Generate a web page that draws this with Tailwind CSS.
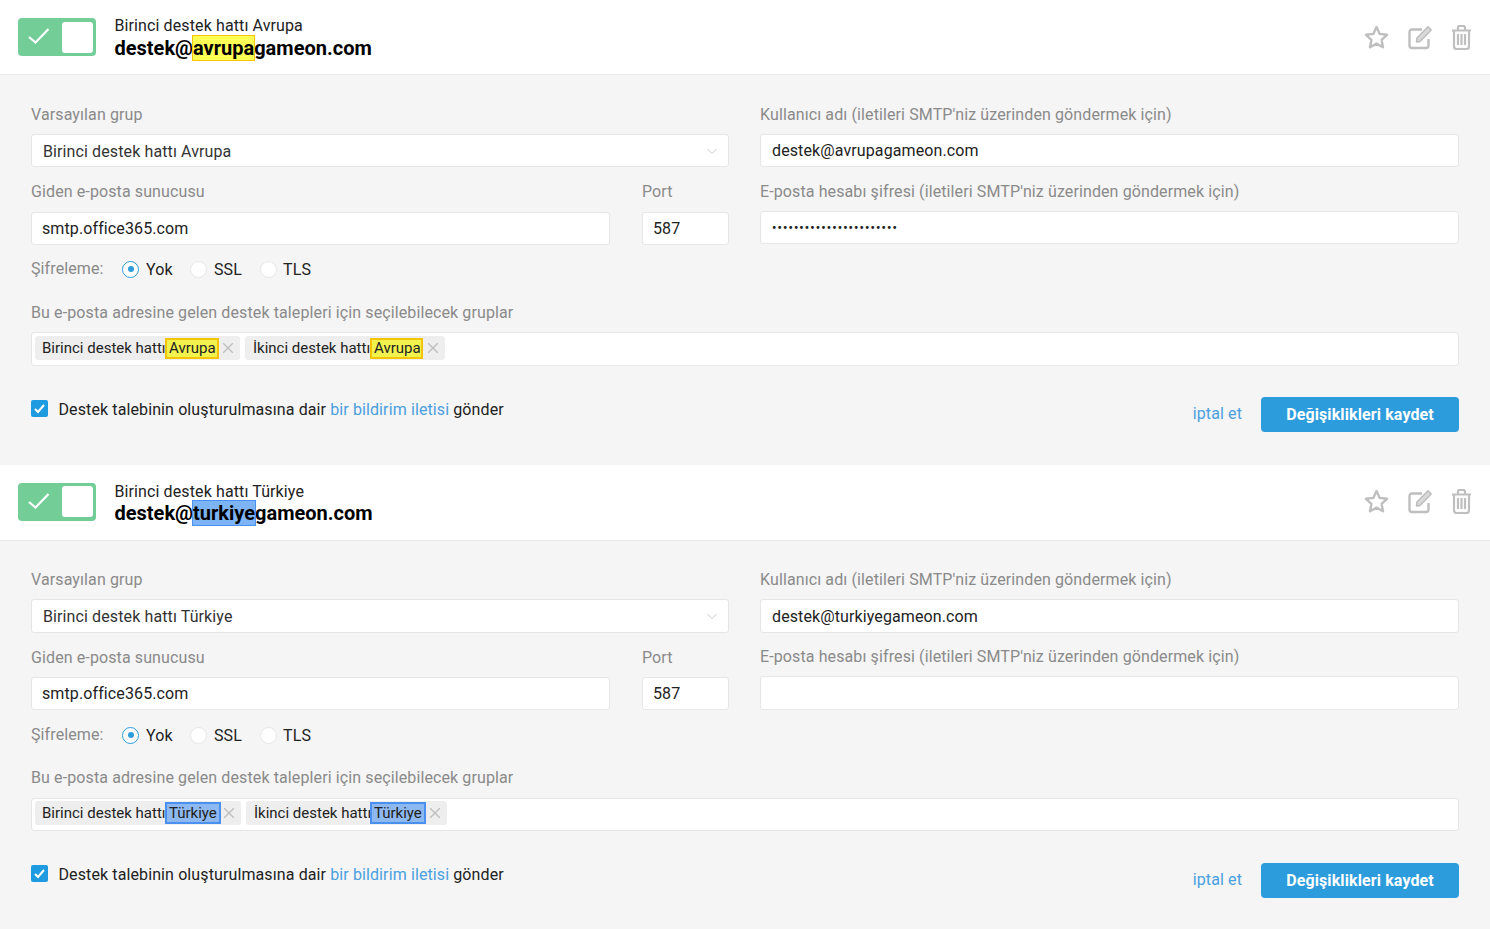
<!DOCTYPE html>
<html lang="tr">
<head>
    <meta charset="UTF-8">
    <title>E-posta hesapları</title>
    <script src="https://cdn.jsdelivr.net/npm/@tailwindcss/browser@4"></script>
</head>
<body class="bg-[#f5f5f5] font-['Roboto',sans-serif] text-[16px] tracking-[0.11px] text-[#222]">

    <!-- Avrupa -->
    <div class="flex h-[75px] items-center border-b border-[#e8e8e8] bg-white pl-[18px] pr-[18px]">
        <div class="flex h-[38px] w-[78px] items-center justify-between rounded-[4px] bg-[#72ce96] pl-[10px] pr-[3px]">
            <svg class="-mt-[2px] h-[22px] w-[22px]" viewBox="0 0 22 22" fill="none" stroke="#fff" stroke-width="2.2"><path d="M1 12l6.500 5.500L20.500 4"/></svg>
            <div class="h-[31px] w-[31px] rounded-[3px] bg-white"></div>
        </div>
        <div class="ml-[18.5px] mt-[2px]">
            <div class="h-[21px] leading-[21px]">Birinci destek hattı Avrupa</div>
            <div class="h-[25px] text-[20px] font-bold leading-[25px] tracking-normal text-black">destek@<span class="bg-[#ffff55] outline outline-1 outline-[#fbc400]">avrupa</span>gameon.com</div>
        </div>
        <div class="ml-auto flex items-center text-[#bfbfbf]">
            <svg class="h-[25px] w-[25px]" viewBox="0 0 25 25" fill="none" stroke="currentColor" stroke-width="2.4" stroke-linejoin="round"><path d="M12.5 2l3.2 6.900 7.300.9-5.400 5.100 1.400 7.400-6.500-3.700-6.500 3.700 1.400-7.400L2 9.800l7.300-.9z"/></svg>
            <svg class="ml-[19px] h-[25px] w-[25px]" viewBox="0 0 25 25" fill="none" stroke="currentColor" stroke-width="2.4" stroke-linejoin="round"><path d="M20.500 14v6.500a2.500 2.500 0 0 1-2.500 2.500H4a2.500 2.500 0 0 1-2.500-2.500V7A2.500 2.500 0 0 1 4 4.500h10"/><path d="M9 13L20 1.800l3.200 3.200L12 16.500 8.500 17z" fill="currentColor" fill-opacity="0.6" stroke-width="1.6"/></svg>
            <svg class="ml-[18px] h-[25px] w-[21px]" viewBox="0 0 21 25" fill="none" stroke="currentColor" stroke-width="2.2"><path d="M1 5.500h19M7 5V2.500A1.500 1.500 0 0 1 8.500 1h4A1.500 1.500 0 0 1 14 2.500V5M3 5.500V21.500A2.500 2.500 0 0 0 5.500 24h10a2.500 2.500 0 0 0 2.500-2.500V5.500M7 9v11M10.500 9v11M14 9v11"/></svg>
        </div>
    </div>
    <div class="h-[390px] px-[31px] pt-[28px]">
        <div class="grid grid-cols-[698px_699px] gap-x-[31px]">
            <div>
                <div class="h-[31px] leading-[24px] text-[#8a8a8a]">Varsayılan grup</div>
                <div class="flex h-[33px] items-center justify-between rounded-[3px] border border-[#e6e6e6] bg-white pl-[11px] pr-[11px]">
                    <span class="mt-[2px] text-[#333]">Birinci destek hattı Avrupa</span>
                    <svg class="h-[10px] w-[10px]" viewBox="0 0 10 10" fill="none" stroke="#c8c8c8"><path d="M.5 3l4.500 4.500L9.500 3"/></svg>
                </div>
                <div class="mt-[13px] grid grid-cols-[579px_87px] gap-x-[32px]">
                    <div>
                        <div class="h-[32px] leading-[24px] text-[#8a8a8a]">Giden e-posta sunucusu</div>
                        <div class="flex h-[33px] items-center rounded-[3px] border border-[#e6e6e6] bg-white px-[10px]">smtp.office365.com</div>
                    </div>
                    <div>
                        <div class="h-[32px] leading-[24px] text-[#8a8a8a]">Port</div>
                        <div class="flex h-[33px] items-center rounded-[3px] border border-[#e6e6e6] bg-white px-[10px]">587</div>
                    </div>
                </div>
            </div>
            <div>
                <div class="h-[31px] leading-[24px] text-[#8a8a8a]">Kullanıcı adı (iletileri SMTP'niz üzerinden göndermek için)</div>
                <div class="flex h-[33px] items-center rounded-[3px] border border-[#e6e6e6] bg-white px-[11px]">destek@avrupagameon.com</div>
                <div class="mt-[13px] h-[31px] leading-[24px] text-[#8a8a8a]">E-posta hesabı şifresi (iletileri SMTP'niz üzerinden göndermek için)</div>
                <div class="flex h-[33px] items-center rounded-[3px] border border-[#e6e6e6] bg-white px-[11px] text-[12px] font-bold tracking-[1.16px]">•••••••••••••••••••••••</div>
            </div>
        </div>
        <div class="mt-[13px] flex h-[22px] items-center">
            <span class="w-[91px] text-[#8a8a8a]">Şifreleme:</span>
            <span class="flex h-[17px] w-[17px] items-center justify-center rounded-full border border-[#2d9cdb] bg-white"><span class="h-[6px] w-[6px] rounded-full bg-[#2d9cdb]"></span></span>
            <span class="ml-[7px] mt-[2px] w-[44px]">Yok</span>
            <span class="h-[17px] w-[17px] rounded-full border border-[#e6e6e6] bg-white"></span>
            <span class="ml-[7px] mt-[2px] w-[46px]">SSL</span>
            <span class="h-[17px] w-[17px] rounded-full border border-[#e6e6e6] bg-white"></span>
            <span class="ml-[6px] mt-[2px]">TLS</span>
        </div>
        <div class="mt-[22px] h-[30px] leading-[22px] text-[#8a8a8a]">Bu e-posta adresine gelen destek talepleri için seçilebilecek gruplar</div>
        <div class="flex h-[34px] items-start gap-x-[5px] rounded-[3px] border border-[#e6e6e6] bg-white pl-[3px] pt-[3px] tracking-normal">
            <div class="flex h-[24px] w-[205px] items-center rounded-[3px] bg-[#eeeeee] pl-[7px] text-[15px]">
                <span class="w-[123px] overflow-hidden whitespace-nowrap">Birinci destek hattı</span>
                <span class="h-[21px] w-[54px] border-2 border-[#f5c400] bg-[#f2f24f] pl-[2px] leading-[17px]">Avrupa</span>
                <svg class="ml-[4px] h-[10px] w-[10px]" viewBox="0 0 10 10" stroke="#bdbdbd" stroke-width="1.3"><path d="M0 0l10 10M10 0L0 10"/></svg>
            </div>
            <div class="flex h-[24px] w-[200px] items-center rounded-[3px] bg-[#eeeeee] pl-[8px] text-[15px]">
                <span class="w-[117px] overflow-hidden whitespace-nowrap">İkinci destek hattı</span>
                <span class="h-[21px] w-[53px] border-2 border-[#f5c400] bg-[#f2f24f] pl-[2px] leading-[17px]">Avrupa</span>
                <svg class="ml-[5px] h-[10px] w-[10px]" viewBox="0 0 10 10" stroke="#bdbdbd" stroke-width="1.3"><path d="M0 0l10 10M10 0L0 10"/></svg>
            </div>
        </div>
        <div class="mt-[31px] flex h-[36px] items-start">
            <div class="mt-[3px] flex h-[17px] w-[17px] items-center justify-center rounded-[2px] bg-[#1e9be0]">
                <svg class="h-[11px] w-[11px]" viewBox="0 0 11 11" fill="none" stroke="#fff" stroke-width="2"><path d="M1 6l3 3 6-7"/></svg>
            </div>
            <span class="ml-[10.5px] mt-[2px] leading-[22px]">Destek talebinin oluşturulmasına dair <span class="text-[#4a9fe0]">bir bildirim iletisi</span> gönder</span>
            <span class="ml-auto mt-[6px] leading-[22px] text-[#4a9fe0]">iptal et</span>
            <div class="ml-[19px] flex h-[35px] w-[198px] items-center justify-center rounded-[4px] bg-[#2d9cdd] font-bold text-white">Değişiklikleri kaydet</div>
        </div>
    </div>

    <!-- Türkiye -->
    <div class="flex h-[76px] items-center border-b border-[#e8e8e8] bg-white pl-[18px] pr-[18px]">
        <div class="-mt-[2px] flex h-[38px] w-[78px] items-center justify-between rounded-[4px] bg-[#72ce96] pl-[10px] pr-[3px]">
            <svg class="-mt-[2px] h-[22px] w-[22px]" viewBox="0 0 22 22" fill="none" stroke="#fff" stroke-width="2.2"><path d="M1 12l6.500 5.500L20.500 4"/></svg>
            <div class="h-[31px] w-[31px] rounded-[3px] bg-white"></div>
        </div>
        <div class="ml-[18.5px]">
            <div class="h-[21px] leading-[23px]">Birinci destek hattı Türkiye</div>
            <div class="h-[25px] text-[20px] font-bold leading-[25px] tracking-normal text-black">destek@<span class="bg-[#7db4f5] outline outline-1 outline-[#4a90f0]">turkiye</span>gameon.com</div>
        </div>
        <div class="-mt-[2px] ml-auto flex items-center text-[#bfbfbf]">
            <svg class="h-[25px] w-[25px]" viewBox="0 0 25 25" fill="none" stroke="currentColor" stroke-width="2.4" stroke-linejoin="round"><path d="M12.5 2l3.2 6.900 7.300.9-5.400 5.100 1.400 7.400-6.500-3.700-6.500 3.700 1.400-7.400L2 9.800l7.300-.9z"/></svg>
            <svg class="ml-[19px] h-[25px] w-[25px]" viewBox="0 0 25 25" fill="none" stroke="currentColor" stroke-width="2.4" stroke-linejoin="round"><path d="M20.500 14v6.500a2.500 2.500 0 0 1-2.500 2.500H4a2.500 2.500 0 0 1-2.500-2.500V7A2.500 2.500 0 0 1 4 4.500h10"/><path d="M9 13L20 1.800l3.200 3.200L12 16.500 8.500 17z" fill="currentColor" fill-opacity="0.6" stroke-width="1.6"/></svg>
            <svg class="ml-[18px] h-[25px] w-[21px]" viewBox="0 0 21 25" fill="none" stroke="currentColor" stroke-width="2.2"><path d="M1 5.500h19M7 5V2.500A1.500 1.500 0 0 1 8.500 1h4A1.500 1.500 0 0 1 14 2.500V5M3 5.500V21.500A2.500 2.500 0 0 0 5.500 24h10a2.500 2.500 0 0 0 2.500-2.500V5.500M7 9v11M10.500 9v11M14 9v11"/></svg>
        </div>
    </div>
    <div class="h-[388px] px-[31px] pt-[27px]">
        <div class="grid grid-cols-[698px_699px] gap-x-[31px]">
            <div>
                <div class="h-[31px] leading-[24px] text-[#8a8a8a]">Varsayılan grup</div>
                <div class="flex h-[34px] items-center justify-between rounded-[3px] border border-[#e6e6e6] bg-white pl-[11px] pr-[11px]">
                    <span class="mt-[2px] text-[#333]">Birinci destek hattı Türkiye</span>
                    <svg class="h-[10px] w-[10px]" viewBox="0 0 10 10" fill="none" stroke="#c8c8c8"><path d="M.5 3l4.500 4.500L9.500 3"/></svg>
                </div>
                <div class="mt-[13px] grid grid-cols-[579px_87px] gap-x-[32px]">
                    <div>
                        <div class="h-[31px] leading-[24px] text-[#8a8a8a]">Giden e-posta sunucusu</div>
                        <div class="flex h-[33px] items-center rounded-[3px] border border-[#e6e6e6] bg-white px-[10px]">smtp.office365.com</div>
                    </div>
                    <div>
                        <div class="h-[31px] leading-[24px] text-[#8a8a8a]">Port</div>
                        <div class="flex h-[33px] items-center rounded-[3px] border border-[#e6e6e6] bg-white px-[10px]">587</div>
                    </div>
                </div>
            </div>
            <div>
                <div class="h-[31px] leading-[24px] text-[#8a8a8a]">Kullanıcı adı (iletileri SMTP'niz üzerinden göndermek için)</div>
                <div class="flex h-[34px] items-center rounded-[3px] border border-[#e6e6e6] bg-white px-[11px]"><span class="mt-[2px]">destek@turkiyegameon.com</span></div>
                <div class="mt-[12px] h-[31px] leading-[24px] text-[#8a8a8a]">E-posta hesabı şifresi (iletileri SMTP'niz üzerinden göndermek için)</div>
                <div class="h-[34px] rounded-[3px] border border-[#e6e6e6] bg-white"></div>
            </div>
        </div>
        <div class="mt-[14px] flex h-[22px] items-center">
            <span class="w-[91px] text-[#8a8a8a]">Şifreleme:</span>
            <span class="flex h-[17px] w-[17px] items-center justify-center rounded-full border border-[#2d9cdb] bg-white"><span class="h-[6px] w-[6px] rounded-full bg-[#2d9cdb]"></span></span>
            <span class="ml-[7px] mt-[2px] w-[44px]">Yok</span>
            <span class="h-[17px] w-[17px] rounded-full border border-[#e6e6e6] bg-white"></span>
            <span class="ml-[7px] mt-[2px] w-[46px]">SSL</span>
            <span class="h-[17px] w-[17px] rounded-full border border-[#e6e6e6] bg-white"></span>
            <span class="ml-[6px] mt-[2px]">TLS</span>
        </div>
        <div class="mt-[20px] h-[32px] leading-[24px] text-[#8a8a8a]">Bu e-posta adresine gelen destek talepleri için seçilebilecek gruplar</div>
        <div class="flex h-[33px] items-start gap-x-[5px] rounded-[3px] border border-[#e6e6e6] bg-white pl-[3px] pt-[2px] tracking-normal">
            <div class="flex h-[24px] w-[206px] items-center rounded-[3px] bg-[#eeeeee] pl-[7px] text-[15px]">
                <span class="w-[123px] overflow-hidden whitespace-nowrap">Birinci destek hattı</span>
                <span class="h-[22px] w-[56px] border-2 border-[#4a90f0] bg-[#8db8f0] pl-[2px] leading-[18px]">Türkiye</span>
                <svg class="ml-[3px] h-[10px] w-[10px]" viewBox="0 0 10 10" stroke="#bdbdbd" stroke-width="1.3"><path d="M0 0l10 10M10 0L0 10"/></svg>
            </div>
            <div class="flex h-[24px] w-[201px] items-center rounded-[3px] bg-[#eeeeee] pl-[8px] text-[15px]">
                <span class="w-[116px] overflow-hidden whitespace-nowrap">İkinci destek hattı</span>
                <span class="h-[22px] w-[56px] border-2 border-[#4a90f0] bg-[#8db8f0] pl-[2px] leading-[18px]">Türkiye</span>
                <svg class="ml-[4px] h-[10px] w-[10px]" viewBox="0 0 10 10" stroke="#bdbdbd" stroke-width="1.3"><path d="M0 0l10 10M10 0L0 10"/></svg>
            </div>
        </div>
        <div class="mt-[32px] flex h-[36px] items-start">
            <div class="mt-[2px] flex h-[17px] w-[17px] items-center justify-center rounded-[2px] bg-[#1e9be0]">
                <svg class="h-[11px] w-[11px]" viewBox="0 0 11 11" fill="none" stroke="#fff" stroke-width="2"><path d="M1 6l3 3 6-7"/></svg>
            </div>
            <span class="ml-[10.5px] mt-[1px] leading-[22px]">Destek talebinin oluşturulmasına dair <span class="text-[#4a9fe0]">bir bildirim iletisi</span> gönder</span>
            <span class="ml-auto mt-[6px] leading-[22px] text-[#4a9fe0]">iptal et</span>
            <div class="ml-[19px] flex h-[35px] w-[198px] items-center justify-center rounded-[4px] bg-[#2d9cdd] font-bold text-white">Değişiklikleri kaydet</div>
        </div>
    </div>
</body>
</html>
